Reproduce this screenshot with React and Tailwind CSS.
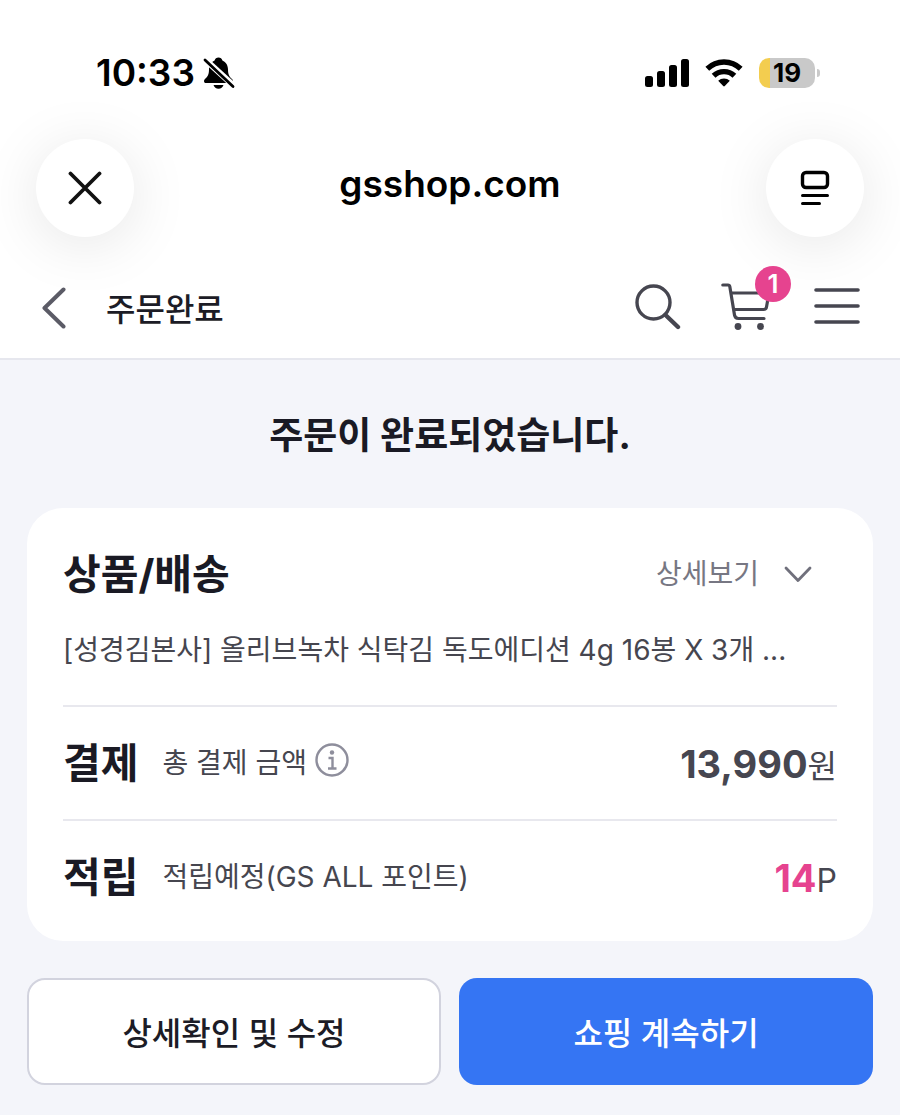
import React from "react";

function BellOffIcon() {
  return (
    <svg width="32" height="34" viewBox="0 0 32 34" aria-hidden="true">
      <path
        d="M15.500 1.500c-2 0-3.400 1.200-3.900 3C8 6 6 9.600 6 13.600c0 5.400-1.600 7.300-4.200 9.600C.4 24.600 1 27 3 27h25c2 0 2.600-2.400 1.200-3.800C26.600 20.900 25 19 25 13.600c0-4-2-7.600-5.600-9.100-.5-1.800-1.900-3-3.900-3z"
        fill="#000"
      />
      <path d="M10.500 29h10c-.7 2.400-2.600 3.800-5 3.800s-4.300-1.400-5-3.800z" fill="#000" />
      <path d="M1 2.500 31 30" stroke="#fff" strokeWidth="6" />
      <path d="M2 4 30 30.500" stroke="#000" strokeWidth="2.800" strokeLinecap="round" />
    </svg>
  );
}

function SignalIcon() {
  return (
    <svg width="44" height="28" viewBox="0 0 44 28" aria-hidden="true">
      <rect x="0" y="17" width="8" height="11" rx="2.500" />
      <rect x="12" y="12" width="8" height="16" rx="2.500" />
      <rect x="24" y="6" width="8" height="22" rx="2.500" />
      <rect x="36" y="0" width="8" height="28" rx="2.500" />
    </svg>
  );
}

function WifiIcon() {
  return (
    <svg width="38" height="28" viewBox="0 0 38 28" aria-hidden="true">
      <g fill="none" stroke="#000" strokeWidth="5.400">
        <path d="M2.300 9.800a24 24 0 0 1 33.400 0" />
        <path d="M8.600 16.800a15 15 0 0 1 20.800 0" />
      </g>
      <path d="M13.200 21.800a8.300 8.300 0 0 1 11.600 0L19.800 27q-.8.800-1.600 0z" />
    </svg>
  );
}

function StatusBar() {
  return (
    <div className="flex h-[50px] items-center justify-between pr-20 pl-24 text-black">
      <div className="flex items-center gap-2">
        <span className="text-[37px] leading-[50px] font-semibold">10:33</span>
        <BellOffIcon />
      </div>
      <div className="flex items-center gap-4">
        <SignalIcon />
        <WifiIcon />
        <div className="flex items-center gap-0.5">
          <div className="flex h-[30px] w-14 items-center justify-center rounded-[10px] bg-linear-to-r from-[#f3cd4f] from-20% to-[#c9c9c9] to-20% text-[26px] leading-[30px] font-bold">
            19
          </div>
          <div className="h-2 w-[3px] rounded-r-full bg-[#c9c9c9]" />
        </div>
      </div>
    </div>
  );
}

function RoundButton({ label, children }) {
  return (
    <button
      type="button"
      aria-label={label}
      className="flex size-[98px] items-center justify-center rounded-full bg-white shadow-[0_8px_60px_rgba(0,0,0,0.1)]"
    >
      {children}
    </button>
  );
}

function BrowserBar() {
  return (
    <div className="mt-[41px] flex items-center justify-between px-9">
      <RoundButton label="닫기">
        <svg width="34" height="34" viewBox="0 0 34 34" fill="none" stroke="#111" strokeWidth="3.800" strokeLinecap="round">
          <path d="M2.500 2.500 31.500 31.500M31.500 2.500 2.500 31.500" />
        </svg>
      </RoundButton>
      <span className="pb-2 text-[37px] leading-[48px] font-semibold text-black">gsshop.com</span>
      <RoundButton label="페이지 메뉴">
        <svg width="30" height="36" viewBox="0 0 30 36" fill="none" stroke="#000" strokeWidth="3.400" strokeLinecap="round">
          <rect x="2.500" y="2.500" width="25" height="15" rx="3.500" />
          <path d="M2.500 25.500h25M2.500 33.500h17" strokeWidth="3" />
        </svg>
      </RoundButton>
    </div>
  );
}

function PageHeader() {
  return (
    <header className="flex h-[123px] items-center justify-between border-b-2 border-[#e6e7ee] pt-5 pr-10 pl-[41px]">
      <div className="flex items-center gap-10">
        <button type="button" aria-label="뒤로">
          <svg width="25" height="42" viewBox="0 0 25 42" fill="none" stroke="#5b5b66" strokeWidth="4" strokeLinecap="round" strokeLinejoin="round">
            <path d="M22.500 2.500 3.500 21l19 18.500" />
          </svg>
        </button>
        <h1 className="pt-1 text-[32px] leading-[48px] font-medium text-[#1c1c26]">주문완료</h1>
      </div>
      <div className="flex items-center pb-1 text-[#464650]">
        <button type="button" aria-label="검색">
          <svg width="46" height="48" viewBox="0 0 46 48" fill="none" stroke="currentColor" strokeLinecap="round">
            <circle cx="18.500" cy="20.500" r="16.500" strokeWidth="3.400" />
            <path d="M30.500 33 43 45" strokeWidth="4.400" />
          </svg>
        </button>
        <button type="button" aria-label="장바구니" className="relative mr-[45px] ml-10">
          <svg width="48" height="48" viewBox="0 0 48 48" fill="none" stroke="currentColor" strokeWidth="3.200" strokeLinecap="round" strokeLinejoin="round">
            <path d="M1.800 3H7q1.500 0 1.800 1.500l4.700 28.500q.6 3.500 4 3.500H43" />
            <path d="M10.500 11H48l-2.500 14q-.4 2.500-3 2.500H13.500" />
            <circle cx="17" cy="44.500" r="3.400" fill="currentColor" stroke="none" />
            <circle cx="39.500" cy="44.500" r="3.400" fill="currentColor" stroke="none" />
          </svg>
          <span className="absolute -top-4 left-[34px] flex size-9 items-center justify-center rounded-full bg-[#e6438f] text-[26px] leading-9 font-semibold text-white">
            1
          </span>
        </button>
        <button type="button" aria-label="메뉴">
          <svg width="46" height="38" viewBox="0 0 46 38" fill="none" stroke="currentColor" strokeWidth="3.600" strokeLinecap="round">
            <path d="M2 3h42M2 19h42M2 35h42" />
          </svg>
        </button>
      </div>
    </header>
  );
}

function SummaryRow({ title, label, info, children }) {
  return (
    <section className="box-content flex h-28 items-center justify-between border-t-2 border-[#e8e8ee]">
      <div className="flex items-center">
        <h3 className="mr-6 text-[41px] leading-[60px] font-bold text-[#1a1a24]">{title}</h3>
        <span className="text-[28px] leading-10 text-[#46464f]">{label}</span>
        {info && (
          <button type="button" aria-label="결제 금액 안내" className="ml-2 pb-1.5">
            <svg width="34" height="34" viewBox="0 0 34 34" fill="none" stroke="#8e8e9c" strokeWidth="2.400">
              <circle cx="17" cy="17" r="15.500" />
              <path d="M13.500 15h4v10M13 25.500h8.500" />
              <circle cx="17" cy="9.500" r="2.200" fill="#8e8e9c" stroke="none" />
            </svg>
          </button>
        )}
      </div>
      <p className="pt-1 text-[32px] leading-[60px] text-[#464650]">{children}</p>
    </section>
  );
}

export default function App() {
  return (
    <div className="min-h-screen bg-[#f4f5fa] font-['Inter','Noto_Sans_CJK_KR',sans-serif]">
      <div className="overflow-hidden bg-white pt-12">
        <StatusBar />
        <BrowserBar />
        <PageHeader />
      </div>

      <main className="px-[27px] pb-[30px]">
        <h2 className="pt-12 pb-11 text-center text-[37px] leading-[56px] font-bold text-[#1a1a24]">
          주문이 완료되었습니다.
        </h2>

        <div className="rounded-[36px] bg-white px-9 pb-2">
          <section className="pt-9 pb-[35px]">
            <div className="flex items-center justify-between pr-6">
              <h3 className="text-[41px] leading-[60px] font-bold text-[#1a1a24]">상품/배송</h3>
              <button type="button" className="flex items-center gap-6 text-[28px] leading-10 text-[#777783]">
                상세보기
                <svg width="30" height="18" viewBox="0 0 30 18" fill="none" stroke="#70707c" strokeWidth="2.800" strokeLinecap="round" strokeLinejoin="round">
                  <path d="M3 3 15 15.500 27 3" />
                </svg>
              </button>
            </div>
            <p className="mt-[26px] truncate text-[28px] leading-10 text-[#46464f]">
              [성경김본사] 올리브녹차 식탁김 독도에디션 4g 16봉 X 3개 ...
            </p>
          </section>
          <SummaryRow title="결제" label="총 결제 금액" info>
            <strong className="text-[38px] font-bold">13,990</strong>원
          </SummaryRow>
          <SummaryRow title="적립" label="적립예정(GS ALL 포인트)">
            <strong className="text-[38px] font-bold text-[#e6438f]">14</strong>P
          </SummaryRow>
        </div>

        <div className="mt-[37px] grid grid-cols-2 gap-[18px]">
          <button
            type="button"
            className="h-[107px] rounded-[18px] border-2 border-[#d2d3de] bg-white pt-1 text-[32px] font-medium text-[#1c1c26]"
          >
            상세확인 및 수정
          </button>
          <button type="button" className="h-[107px] rounded-[18px] bg-[#3575f3] pt-1 text-[32px] font-medium text-white">
            쇼핑 계속하기
          </button>
        </div>
      </main>
    </div>
  );
}
